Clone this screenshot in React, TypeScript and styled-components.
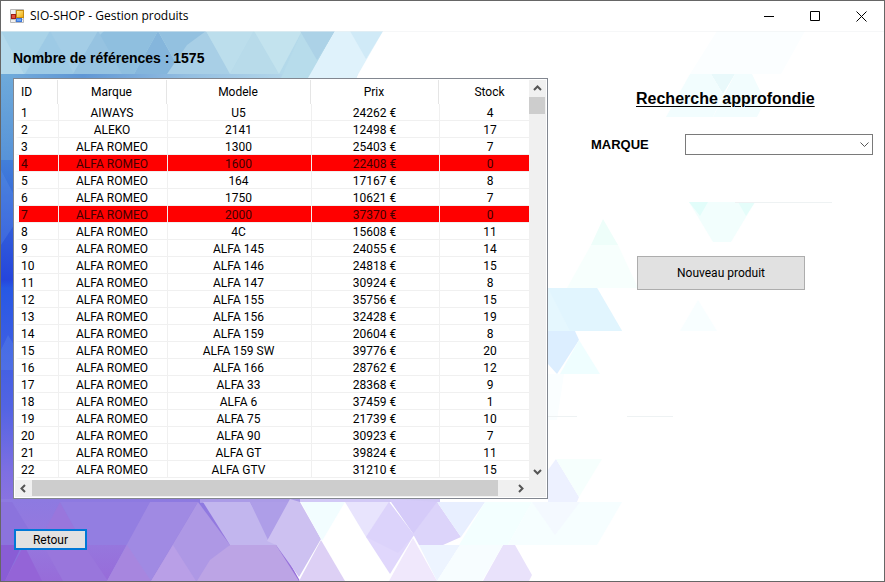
import React from "react";
import styled, { createGlobalStyle } from "styled-components";

const GlobalStyle = createGlobalStyle`
  *, *::before, *::after { box-sizing: border-box; }
  body {
    margin: 0;
    color: #000;
    background: #fff;
    font-family: Roboto, "Liberation Sans", Arial, sans-serif;
    font-size: 12px;
  }
  button, select { font: inherit; color: inherit; }
`;

const Window = styled.div`
  display: flex;
  flex-direction: column;
  min-height: 100vh;
  border: 1px solid #666;
  background: #fff;
`;

const TitleBar = styled.header`
  display: flex;
  align-items: center;
  height: 30px;
  padding-left: 9px;
  background: #fff;
`;

const Title = styled.h1`
  flex: 1;
  margin: 0 0 0 5px;
  font: 400 12px/16px "Open Sans", "Noto Sans", sans-serif;
  white-space: nowrap;
`;

const CaptionButton = styled.button`
  display: grid;
  place-items: center;
  width: 46px;
  height: 30px;
  padding: 0;
  border: 0;
  background: transparent;
`;

const Client = styled.main`
  position: relative;
  isolation: isolate;
  display: grid;
  flex: 1;
  grid-template-columns: minmax(0, 535fr) minmax(0, 325fr);
  padding: 17px 11px 31px 12px;
`;

const Backdrop = styled.svg`
  position: absolute;
  inset: 0;
  z-index: -1;
  width: 100%;
  height: 100%;
`;

const ListPane = styled.section`
  display: flex;
  flex-direction: column;
`;

const Count = styled.h2`
  margin: 0 0 10px;
  font: 700 14px/20px "Liberation Sans", Arial, sans-serif;
`;

const ListView = styled.div`
  display: grid;
  grid-template-columns: minmax(0, 1fr) 17px;
  grid-template-rows: auto 17px;
  padding: 1px;
  border: 1px solid #828790;
  background: #fff;
`;

const Viewport = styled.div`
  overflow: hidden;
  padding-bottom: 2px;
`;

const Table = styled.table`
  width: calc(100% + 14px);
  table-layout: fixed;
  border-collapse: separate;
  border-spacing: 0;
`;

const Col = styled.col<{ $width?: number }>`
  width: ${(p) => (p.$width ? `${p.$width}px` : "auto")};
`;

const HeadCell = styled.th<{ $first?: boolean }>`
  height: 24px;
  padding: 0 4px 0 ${(p) => (p.$first ? 6 : 0)}px;
  font-weight: 400;
  line-height: 16px;
  text-align: ${(p) => (p.$first ? "left" : "center")};
  background: linear-gradient(#e5e5e5, #e5e5e5) no-repeat right 1px top / 1px 100%;
`;

const Row = styled.tr<{ $empty: boolean }>`
  color: ${(p) => (p.$empty ? "#400000" : "#000")};
  background: ${(p) => (p.$empty ? "#f00" : "transparent")};
`;

const Cell = styled.td<{ $first?: boolean }>`
  height: 17px;
  padding: 2px ${(p) => (p.$first ? 0 : 2)}px 0 ${(p) => (p.$first ? 2 : 0)}px;
  border: solid #f0f0f0;
  border-width: 0 1px 1px 0;
  ${(p) => p.$first && "border-left: 4px solid #fff;"}
  line-height: 14px;
  text-align: ${(p) => (p.$first ? "left" : "center")};
  white-space: nowrap;
`;

const ScrollBar = styled.div<{ $vertical?: boolean }>`
  display: flex;
  flex-direction: ${(p) => (p.$vertical ? "column" : "row")};
  background: #f0f0f0;
`;

const ScrollArrow = styled.button`
  display: grid;
  flex: none;
  place-items: center;
  width: 17px;
  height: 17px;
  padding: 0;
  border: 0;
  background: #f0f0f0;
`;

const VerticalThumb = styled.div`
  width: 16px;
  height: 17px;
  margin: 0 0 auto;
  background: #cdcdcd;
`;

const HorizontalTrack = styled.div`
  flex: 1;
  padding: 0 14px 1px 0;
`;

const HorizontalThumb = styled.div`
  height: 100%;
  background: #cdcdcd;
`;

const ScrollCorner = styled.div`
  background: #f0f0f0;
`;

const PushButton = styled.button<{ $default?: boolean }>`
  width: ${(p) => (p.$default ? 73 : 168)}px;
  height: ${(p) => (p.$default ? 21 : 34)}px;
  padding: 0;
  border: ${(p) => (p.$default ? "2px solid #0078d7" : "1px solid #adadad")};
  background: #e1e1e1;
`;

const Footer = styled.footer`
  padding: 30px 0 0 1px;
`;

const SearchPane = styled.aside`
  padding: 41px 0 0 43px;
`;

const SearchTitle = styled.h2`
  margin: 0 0 25px 45px;
  font: 700 16px/20px "Liberation Sans", Arial, sans-serif;
  text-decoration: underline;
  text-decoration-thickness: 1px;
  text-underline-offset: 2px;
  white-space: nowrap;
`;

const Field = styled.div`
  display: flex;
  align-items: center;
  margin-bottom: 101px;
`;

const FieldLabel = styled.label`
  width: 94px;
  font: 700 13px/20px "Liberation Sans", Arial, sans-serif;
`;

const SelectBox = styled.div`
  position: relative;
  flex: 1;
  height: 21px;

  svg {
    position: absolute;
    top: 8px;
    right: 4px;
    pointer-events: none;
  }
`;

const Select = styled.select`
  display: block;
  width: 100%;
  height: 100%;
  padding: 0 20px 0 4px;
  border: 1px solid #7a7a7a;
  border-radius: 0;
  background: #fff;
  appearance: none;
`;

const Actions = styled.div`
  padding-left: 46px;
`;

const products: [number, string, string, number, number][] = [
  [1, "AIWAYS", "U5", 24262, 4],
  [2, "ALEKO", "2141", 12498, 17],
  [3, "ALFA ROMEO", "1300", 25403, 7],
  [4, "ALFA ROMEO", "1600", 22408, 0],
  [5, "ALFA ROMEO", "164", 17167, 8],
  [6, "ALFA ROMEO", "1750", 10621, 7],
  [7, "ALFA ROMEO", "2000", 37370, 0],
  [8, "ALFA ROMEO", "4C", 15608, 11],
  [9, "ALFA ROMEO", "ALFA 145", 24055, 14],
  [10, "ALFA ROMEO", "ALFA 146", 24818, 15],
  [11, "ALFA ROMEO", "ALFA 147", 30924, 8],
  [12, "ALFA ROMEO", "ALFA 155", 35756, 15],
  [13, "ALFA ROMEO", "ALFA 156", 32428, 19],
  [14, "ALFA ROMEO", "ALFA 159", 20604, 8],
  [15, "ALFA ROMEO", "ALFA 159 SW", 39776, 20],
  [16, "ALFA ROMEO", "ALFA 166", 28762, 12],
  [17, "ALFA ROMEO", "ALFA 33", 28368, 9],
  [18, "ALFA ROMEO", "ALFA 6", 37459, 1],
  [19, "ALFA ROMEO", "ALFA 75", 21739, 10],
  [20, "ALFA ROMEO", "ALFA 90", 30923, 7],
  [21, "ALFA ROMEO", "ALFA GT", 39824, 11],
  [22, "ALFA ROMEO", "ALFA GTV", 31210, 15],
];

const arrowPaths = {
  up: "M1 6 4.500 2.500 8 6",
  down: "M1 3 4.500 6.500 8 3",
  left: "M6 1 2.500 4.500 6 8",
  right: "M3 1 6.500 4.500 3 8",
};

function Arrow({ dir }: { dir: keyof typeof arrowPaths }) {
  return (
    <svg width="9" height="9" viewBox="0 0 9 9" aria-hidden="true">
      <path d={arrowPaths[dir]} fill="none" stroke="#555" strokeWidth="2" />
    </svg>
  );
}

function AppIcon() {
  return (
    <svg width="15" height="15" viewBox="0 0 15 15" aria-hidden="true">
      <defs>
        <linearGradient id="gold" x2="1" y2="1">
          <stop stopColor="#fff0a0" />
          <stop offset="1" stopColor="#f0a800" />
        </linearGradient>
      </defs>
      <path d="M.5.500h13v13H.5z" fill="#f0f0f0" stroke="#b8b8b8" />
      <path d="M1 10.500h13M5.500 1v13" stroke="#c4c4c4" />
      <rect x="6.500" y="1.500" width="7" height="7" fill="url(#gold)" stroke="#c58a12" />
      <rect x="1.500" y="5.500" width="4" height="4" fill="#e0503c" stroke="#a01c14" />
      <rect x="6.500" y="9.500" width="5" height="3" fill="#6aa5f5" stroke="#3f77d8" />
    </svg>
  );
}

const facets: [string, string][] = [
  ["1,31 50,31 25,74 1,74", "#a9d3e8"],
  ["1,31 24,74 1,74", "#b4d9eb"],
  ["50,31 104,31 80,74 25,74", "#a3cde6"],
  ["50,31 74,74 25,74", "#9dcae5"],
  ["104,31 158,31 134,74 74,74 90,45", "#8fbfdf"],
  ["98,31 122,74 73,74", "#96c3e1"],
  ["158,31 182,74 134,74", "#85b6dc"],
  ["158,31 206,31 182,74", "#93c1e0"],
  ["206,31 231,74 167,74 187,45", "#a8cfe6"],
  ["206,31 254,31 230,74", "#bcdeec"],
  ["254,31 279,74 230,74", "#b8dbea"],
  ["254,31 302,31 279,74", "#c3e3ee"],
  ["302,31 318,61 309,78 281,78", "#b7dceb"],
  ["300,31 335,31 317,60", "#acd2e7"],
  ["335,31 383,31 356,78 308,78", "#dff2fb"],
  ["350,31 383,31 366,59", "#d0eaf7"],
  ["711,74 735,74 723,94", "#e9f9fb"],
  ["690,74 711,74 723,94 713,117 666,117", "#f2fdfe"],
  ["735,74 752,74 765,101 757,117 713,117", "#f2fdfe"],
  ["717,31 805,31 781,74 690,74", "#fbfeff"],
  ["689,202 755,202 731,242 713,242", "#f2fefd"],
  ["689,202 708,202 700,216", "#e2fdfa"],
  ["738,202 755,202 746,216", "#e5fdfa"],
  ["603,219 618,245 591,245", "#eefefa"],
  ["591,245 618,245 638,288 567,288", "#f7fffd"],
  ["548,288 597,288 622,331 548,331", "#e5f7fe"],
  ["548,288 570,331 622,331 597,288", "#e1f5fe"],
  ["548,331 575,331 579,340 557,374 548,364", "#dceeff"],
  ["579,340 600,374 560,374", "#effeff"],
  ["698,300 717,331 680,331", "#f8feff"],
  ["548,374 564,374 557,420 548,420", "#fafeff"],
  ["556,459 579,497 577,502 548,502 548,470", "#edf1ff"],
  ["556,459 602,459 579,497", "#f6fffd"],
  ["12,502 34,538 20,560 1,574 1,502", "#8b73dd"],
  ["1,545 22,545 5,581 1,581", "#895dd5"],
  ["24,545 42,581 5,581", "#9464d7"],
  ["60,502 84,545 108,581 63,581 40,540", "#9976dc"],
  ["60,502 150,502 127,545 84,545", "#937ee1"],
  ["150,502 198,502 151,581 107,581", "#a08ae3"],
  ["127,545 151,581 107,581", "#a786df"],
  ["198,502 230,545 203,581 151,581", "#ae98e5"],
  ["173,545 196,581 151,581", "#b99fe7"],
  ["203,502 250,502 276,545 230,545", "#c2b6ee"],
  ["250,502 290,502 268,540", "#ae9ee8"],
  ["290,499 300,502 321,539 299,577 276,545 267,541", "#cdc1f1"],
  ["230,545 276,545 299,581 197,581 210,560", "#bca4e5"],
  ["321,540 345,581 299,581", "#ddd0f5"],
  ["301,502 345,502 322,541", "#f2fdff"],
  ["345,502 390,502 366,537", "#e8e4fd"],
  ["389,499 439,502 414,535", "#d5cbf9"],
  ["389,502 414,535 390,574 366,537", "#e0d7fc"],
  ["389,502 414,535 398,553 366,537", "#dcd3fb"],
  ["437,502 461,537 443,545 419,545 413,534", "#dcd4fa"],
  ["413,538 437,581 389,581", "#f0e8fc"],
  ["419,545 460,545 437,581", "#edf4ff"],
  ["437,502 485,502 461,537", "#e8efff"],
  ["485,502 532,502 508,545 459,545", "#f3ffff"],
  ["503,545 515,545 532,575 529,581 483,581", "#e9e2fb"],
  ["460,545 503,545 482,581 437,581", "#f7fdff"],
  ["532,502 622,502 597,545 508,545", "#f6feff"],
  ["532,502 580,502 555,535", "#f4f9ff"],
];

function Facets() {
  return (
    <Backdrop viewBox="1 31 883 550" preserveAspectRatio="none" aria-hidden="true">
      <defs>
        <linearGradient id="edge" x2="0" y2="1">
          <stop stopColor="#6eaada" />
          <stop offset=".2" stopColor="#5793d8" />
          <stop offset=".2" stopColor="#427fd9" />
          <stop offset=".48" stopColor="#2545dc" />
          <stop offset=".5" stopColor="#2758e4" />
          <stop offset=".78" stopColor="#5364e3" />
          <stop offset=".93" stopColor="#7e6fe2" />
          <stop offset="1" stopColor="#8a73e0" />
        </linearGradient>
        <linearGradient id="violet" x2="0" y2="1">
          <stop stopColor="#8d7ae1" />
          <stop offset=".5" stopColor="#9678de" />
          <stop offset="1" stopColor="#976cd9" />
        </linearGradient>
        <linearGradient id="rim">
          <stop stopColor="#6fa8da" />
          <stop offset=".2" stopColor="#6097d5" />
          <stop offset=".5" stopColor="#93bee1" />
          <stop offset=".85" stopColor="#b9dbec" />
          <stop offset="1" stopColor="#d3ebf7" />
        </linearGradient>
      </defs>
      <path d="M1 31H335L308 79H1Z" fill="#b3d9ea" />
      <path d="M1 74H110V502H1Z" fill="url(#edge)" />
      <path d="M14 74H358L356 79H14Z" fill="url(#rim)" />
      <path d="M1 499H254L300 581H1Z" fill="url(#violet)" />
      <path d="M200 495H300V503H200Z" fill="#ab9be7" />
      <path d="M300 495H440V502H300Z" fill="#d2c9f6" />
      {facets.map(([points, fill]) => (
        <polygon key={points} points={points} fill={fill} />
      ))}
      <path d="M1 170 14 195V225L1 245ZM1 350 8 335 14 345V370H1Z" fill="#6c9cec" opacity=".25" />
      <path d="M735 202.500H832M627 416.500H673M548 416.500H577" stroke="#eef2f3" />
      <path d="M1 31.500H884" stroke="#eef1f3" opacity=".5" />
    </Backdrop>
  );
}

export default function App() {
  return (
    <>
      <GlobalStyle />
      <Window>
        <TitleBar>
          <AppIcon />
          <Title>SIO-SHOP - Gestion produits</Title>
          <CaptionButton aria-label="Réduire">
            <svg width="11" height="11" viewBox="0 0 11 11">
              <path d="M0 5.500h10" stroke="#000" />
            </svg>
          </CaptionButton>
          <CaptionButton aria-label="Agrandir">
            <svg width="11" height="11" viewBox="0 0 11 11">
              <path d="M.5.500h9v9h-9z" fill="none" stroke="#000" />
            </svg>
          </CaptionButton>
          <CaptionButton aria-label="Fermer">
            <svg width="11" height="11" viewBox="0 0 11 11">
              <path d="m.5.500 10 10m0-10-10 10" stroke="#000" />
            </svg>
          </CaptionButton>
        </TitleBar>
        <Client>
          <Facets />
          <ListPane>
            <Count>Nombre de références : 1575</Count>
            <ListView>
              <Viewport>
                <Table>
                  <colgroup>
                    <Col $width={44} />
                    <Col $width={109} />
                    <Col $width={144} />
                    <Col $width={128} />
                    <Col />
                  </colgroup>
                  <thead>
                    <tr>
                      <HeadCell $first>ID</HeadCell>
                      <HeadCell>Marque</HeadCell>
                      <HeadCell>Modele</HeadCell>
                      <HeadCell>Prix</HeadCell>
                      <HeadCell>Stock</HeadCell>
                    </tr>
                  </thead>
                  <tbody>
                    {products.map(([id, brand, model, price, stock]) => (
                      <Row key={id} $empty={stock === 0}>
                        <Cell $first>{id}</Cell>
                        <Cell>{brand}</Cell>
                        <Cell>{model}</Cell>
                        <Cell>{price} €</Cell>
                        <Cell>{stock}</Cell>
                      </Row>
                    ))}
                  </tbody>
                </Table>
              </Viewport>
              <ScrollBar $vertical>
                <ScrollArrow aria-label="Défiler vers le haut"><Arrow dir="up" /></ScrollArrow>
                <VerticalThumb />
                <ScrollArrow aria-label="Défiler vers le bas"><Arrow dir="down" /></ScrollArrow>
              </ScrollBar>
              <ScrollBar>
                <ScrollArrow aria-label="Défiler vers la gauche"><Arrow dir="left" /></ScrollArrow>
                <HorizontalTrack>
                  <HorizontalThumb />
                </HorizontalTrack>
                <ScrollArrow aria-label="Défiler vers la droite"><Arrow dir="right" /></ScrollArrow>
              </ScrollBar>
              <ScrollCorner />
            </ListView>
            <Footer>
              <PushButton $default>Retour</PushButton>
            </Footer>
          </ListPane>
          <SearchPane>
            <SearchTitle>Recherche approfondie</SearchTitle>
            <Field>
              <FieldLabel htmlFor="brand">MARQUE</FieldLabel>
              <SelectBox>
                <Select id="brand" defaultValue="">
                  <option value=""></option>
                  <option>AIWAYS</option>
                  <option>ALEKO</option>
                  <option>ALFA ROMEO</option>
                </Select>
                <svg width="9" height="6" viewBox="0 0 9 6" aria-hidden="true">
                  <path d="m.5.500 4 4 4-4" fill="none" stroke="#555" />
                </svg>
              </SelectBox>
            </Field>
            <Actions>
              <PushButton>Nouveau produit</PushButton>
            </Actions>
          </SearchPane>
        </Client>
      </Window>
    </>
  );
}
